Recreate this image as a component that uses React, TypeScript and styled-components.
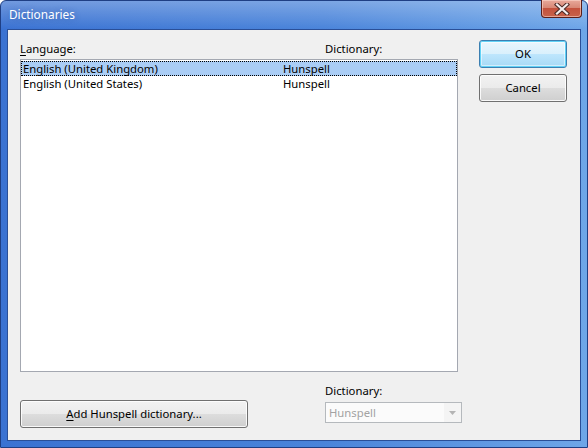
import React from "react";
import styled, { createGlobalStyle } from "styled-components";

const GlobalStyle = createGlobalStyle`
  html, body { margin: 0; padding: 0; background: #ffffff; }
  body {
    width: 588px;
    height: 448px;
    overflow: hidden;
    font-family: "Noto Sans", "Segoe UI", sans-serif;
    font-size: 11.3px;
    color: #000;
  }
  * { box-sizing: border-box; }
`;

const Window = styled.div`
  width: 588px;
  height: 448px;
  display: flex;
  flex-direction: column;
  border: 1px solid #1f3f84;
  border-radius: 6px 6px 0 0;
  background:
    linear-gradient(to bottom, rgba(255, 255, 255, 0.28), rgba(255, 255, 255, 0) 28px),
    linear-gradient(to right, #3a72d2 0%, #4a84da 55%, #6ea6e8 100%);
`;

const TitleBar = styled.div`
  height: 28px;
  display: flex;
  align-items: center;
  padding-left: 8px;
`;

const Title = styled.span`
  color: #ffffff;
  font-size: 11.8px;
  line-height: 16px;
  padding-bottom: 3px;
  text-shadow: 0 0 6px rgba(20, 50, 120, 0.35);
`;

const CloseButton = styled.div`
  margin-left: auto;
  margin-right: 5px;
  margin-top: -1px;
  align-self: flex-start;
  width: 41px;
  height: 18px;
  border: 1px solid #5a1e1a;
  border-top: none;
  border-radius: 0 0 4px 4px;
  background: linear-gradient(to bottom, #e8a99b 0%, #d88876 45%, #c4523d 50%, #c8624a 100%);
  box-shadow: inset 0 0 0 1px rgba(255, 220, 210, 0.55);
  display: flex;
  align-items: center;
  justify-content: center;
`;

const Body = styled.div`
  flex: 1;
  margin: 0 6px 6px 6px;
  border: 1px solid #2a4f98;
  background: #f0f0f0;
  padding: 11px 13px 0 12px;
  display: grid;
  grid-template-columns: 442px 88px;
  column-gap: 17px;
  align-items: start;
`;

const LeftColumn = styled.div`
  display: flex;
  flex-direction: column;
`;

const HeaderRow = styled.div`
  display: grid;
  grid-template-columns: 305px auto;
  height: 16px;
  line-height: 16px;
  margin-bottom: 2px;
`;

const Label = styled.span`
  line-height: 16px;
  white-space: nowrap;
`;

const Mnemonic = styled.span`
  text-decoration: underline;
  text-underline-offset: 2px;
`;

const ListBox = styled.div`
  width: 438px;
  height: 313px;
  border: 1px solid #a4a8b1;
  background: #ffffff;
  padding-top: 1px;
  display: flex;
  flex-direction: column;
`;

const Row = styled.div<{ $selected?: boolean }>`
  height: 15px;
  display: grid;
  grid-template-columns: 260px auto;
  align-items: center;
  line-height: 15px;
  white-space: nowrap;
  padding-left: 1px;
  background: ${(p) => (p.$selected ? "#aacdf5" : "transparent")};
  outline: ${(p) => (p.$selected ? "1px dotted #000" : "none")};
  outline-offset: -1px;
`;

const Cell = styled.span`
  padding-left: 1px;
`;

const BottomRow = styled.div`
  margin-top: 11px;
  height: 45px;
  display: flex;
  justify-content: space-between;
`;

const Button = styled.div<{ $default?: boolean; $width: number }>`
  width: ${(p) => p.$width}px;
  height: 28px;
  border-radius: 3px;
  display: flex;
  align-items: center;
  justify-content: center;
  padding-bottom: 1px;
  white-space: nowrap;
  border: 1px solid ${(p) => (p.$default ? "#3c7fb1" : "#707070")};
  background: ${(p) =>
    p.$default
      ? "linear-gradient(to bottom, #eaf6fd 0%, #d9f0fc 50%, #bee6fd 50%, #a7d9f5 100%)"
      : "linear-gradient(to bottom, #f2f2f2 0%, #ebebeb 50%, #dddddd 50%, #cfcfcf 100%)"};
  box-shadow: ${(p) =>
    p.$default
      ? "inset 0 0 0 1px #62d2f6, inset 0 0 0 2px rgba(255,255,255,0.5)"
      : "inset 0 0 0 1px rgba(255,255,255,0.85)"};
`;

const AddButton = styled(Button)`
  align-self: flex-end;
`;

const ComboGroup = styled.div`
  width: 137px;
  display: flex;
  flex-direction: column;
  gap: 3px;
`;

const Combo = styled.div`
  height: 21px;
  border: 1px solid #b5b9bd;
  background: #fbfbfb;
  display: flex;
  align-items: center;
  color: #a3a3a3;
`;

const ComboText = styled.span`
  flex: 1;
  padding-left: 3px;
  line-height: 16px;
`;

const ComboArrow = styled.div`
  width: 17px;
  height: 100%;
  display: flex;
  align-items: center;
  justify-content: center;
  background: #f4f4f4;
`;

const RightColumn = styled.div`
  display: flex;
  flex-direction: column;
  gap: 6px;
  margin-top: -1px;
`;

export default function App() {
  return (
    <>
      <GlobalStyle />
      <Window>
        <TitleBar>
          <Title>Dictionaries</Title>
          <CloseButton>
            <svg width="16" height="12" viewBox="0 0 16 12">
              <path d="M3 1.5 L13 10.5 M13 1.5 L3 10.5" stroke="#4a2a26" strokeWidth="4.2" strokeLinecap="square" />
              <path d="M3 1.5 L13 10.5 M13 1.5 L3 10.5" stroke="#f4eeee" strokeWidth="2.2" strokeLinecap="square" />
            </svg>
          </CloseButton>
        </TitleBar>
        <Body>
          <LeftColumn>
            <HeaderRow>
              <Label>
                <Mnemonic>L</Mnemonic>anguage:
              </Label>
              <Label>Dictionary:</Label>
            </HeaderRow>
            <ListBox>
              <Row $selected>
                <Cell>English (United Kingdom)</Cell>
                <Cell>Hunspell</Cell>
              </Row>
              <Row>
                <Cell>English (United States)</Cell>
                <Cell>Hunspell</Cell>
              </Row>
            </ListBox>
            <BottomRow>
              <AddButton $width={228}>
                <span>
                  <Mnemonic>A</Mnemonic>dd Hunspell dictionary...
                </span>
              </AddButton>
              <ComboGroup>
                <Label>Dictionary:</Label>
                <Combo>
                  <ComboText>Hunspell</ComboText>
                  <ComboArrow>
                    <svg width="7" height="4" viewBox="0 0 7 4">
                      <path d="M0 0 H7 L3.5 4 Z" fill="#b4b4b4" />
                    </svg>
                  </ComboArrow>
                </Combo>
              </ComboGroup>
            </BottomRow>
          </LeftColumn>
          <RightColumn>
            <Button $default $width={88}>OK</Button>
            <Button $width={88}>Cancel</Button>
          </RightColumn>
        </Body>
      </Window>
    </>
  );
}
